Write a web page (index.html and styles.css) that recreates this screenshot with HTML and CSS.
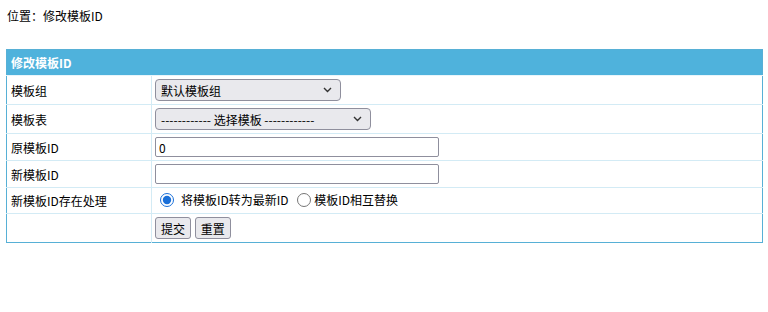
FILE: index.html
```html
<!DOCTYPE html>
<html lang="zh-CN">
<head>
    <meta charset="UTF-8">
    <title>修改模板ID</title>
    <link rel="stylesheet" href="styles.css">
</head>
<body>
    <div class="position">位置：修改模板ID</div>

    <form class="edit-form">
        <table class="form-table">
            <tr class="head">
                <td colspan="2">修改模板ID</td>
            </tr>
            <tr class="r-tall">
                <td class="label">模板组</td>
                <td>
                    <select class="sel sel-group">
                        <option>默认模板组</option>
                    </select>
                </td>
            </tr>
            <tr class="r-tall">
                <td class="label">模板表</td>
                <td>
                    <select class="sel sel-table">
                        <option>------------ 选择模板 ------------</option>
                    </select>
                </td>
            </tr>
            <tr>
                <td class="label">原模板ID</td>
                <td><input class="txt" type="text" value="0"></td>
            </tr>
            <tr>
                <td class="label">新模板ID</td>
                <td><input class="txt" type="text" value=""></td>
            </tr>
            <tr class="r-short">
                <td class="label">新模板ID存在处理</td>
                <td class="radios">
                    <label class="radio first"><input type="radio" name="mode" checked> 将模板ID转为最新ID</label>
                    <label class="radio"><input type="radio" name="mode"> 模板ID相互替换</label>
                </td>
            </tr>
            <tr class="r-tall">
                <td class="label"></td>
                <td>
                    <button class="btn" type="submit">提交</button>
                    <button class="btn" type="reset">重置</button>
                </td>
            </tr>
        </table>
    </form>
</body>
</html>
```

FILE: styles.css
```css
body {
    margin: 0;
    padding: 8px 6px;
    font-family: "Noto Sans CJK SC", "Liberation Sans", sans-serif;
    font-size: 12px;
    color: #000;
    background: #fff;
}
.position {
    padding-left: 1px;
    line-height: 16px;
}
.edit-form {
    margin-top: 25px;
}
.form-table {
    width: 757px;
    border-collapse: collapse;
    border: 1px solid #57b0d6;
}
.form-table td {
    height: 26px;
    padding: 0 3px;
    border-bottom: 1px solid #d3ebf5;
    vertical-align: middle;
}
.form-table td.label {
    width: 137px;
    padding-left: 4px;
    border-right: 1px solid #d3ebf5;
}
.form-table td.radios {
    padding-left: 8px;
}
.form-table tr.r-tall td {
    height: 28px;
}
.form-table tr.r-short td {
    height: 25px;
}
.form-table tr:last-child td {
    border-bottom: none;
}
.form-table tr.head td {
    height: 25px;
    background: #4fb2dc;
    color: #fff;
    font-weight: bold;
    padding-left: 4px;
    border-bottom: 1px solid #e8f5fb;
}
.sel {
    appearance: none;
    -webkit-appearance: none;
    height: 22px;
    margin: 0;
    padding: 0 20px 0 5px;
    font-family: inherit;
    font-size: 12px;
    color: #000;
    background: #e9e9ed url("data:image/svg+xml,%3Csvg xmlns='http://www.w3.org/2000/svg' width='9' height='6' viewBox='0 0 9 6'%3E%3Cpath d='M1 1l3.5 3.5L8 1' fill='none' stroke='%23333' stroke-width='1.4'/%3E%3C/svg%3E") no-repeat right 8px center;
    border: 1px solid #8f8f9d;
    border-radius: 4px;
    vertical-align: middle;
}
.sel-group {
    width: 186px;
}
.sel-table {
    width: 216px;
}
.txt {
    box-sizing: border-box;
    width: 284px;
    height: 20px;
    margin: 0;
    padding: 0 3px;
    font-family: inherit;
    font-size: 12px;
    border: 1px solid #8f8f9d;
    border-radius: 2px;
    vertical-align: middle;
}
.radio {
    display: inline-flex;
    align-items: center;
}
.radio.first {
    margin-right: 6px;
}
.radio input {
    width: 14px;
    height: 14px;
    margin: 0 3px 0 0;
    accent-color: #1a6fd8;
}
.radio.first input {
    margin-right: 7px;
}
.btn {
    height: 22px;
    margin: 0 1px 0 0;
    padding: 0 5px;
    font-family: inherit;
    font-size: 12px;
    color: #000;
    background: #e9e9ed;
    border: 1px solid #8f8f9d;
    border-radius: 3px;
    vertical-align: middle;
}
```
